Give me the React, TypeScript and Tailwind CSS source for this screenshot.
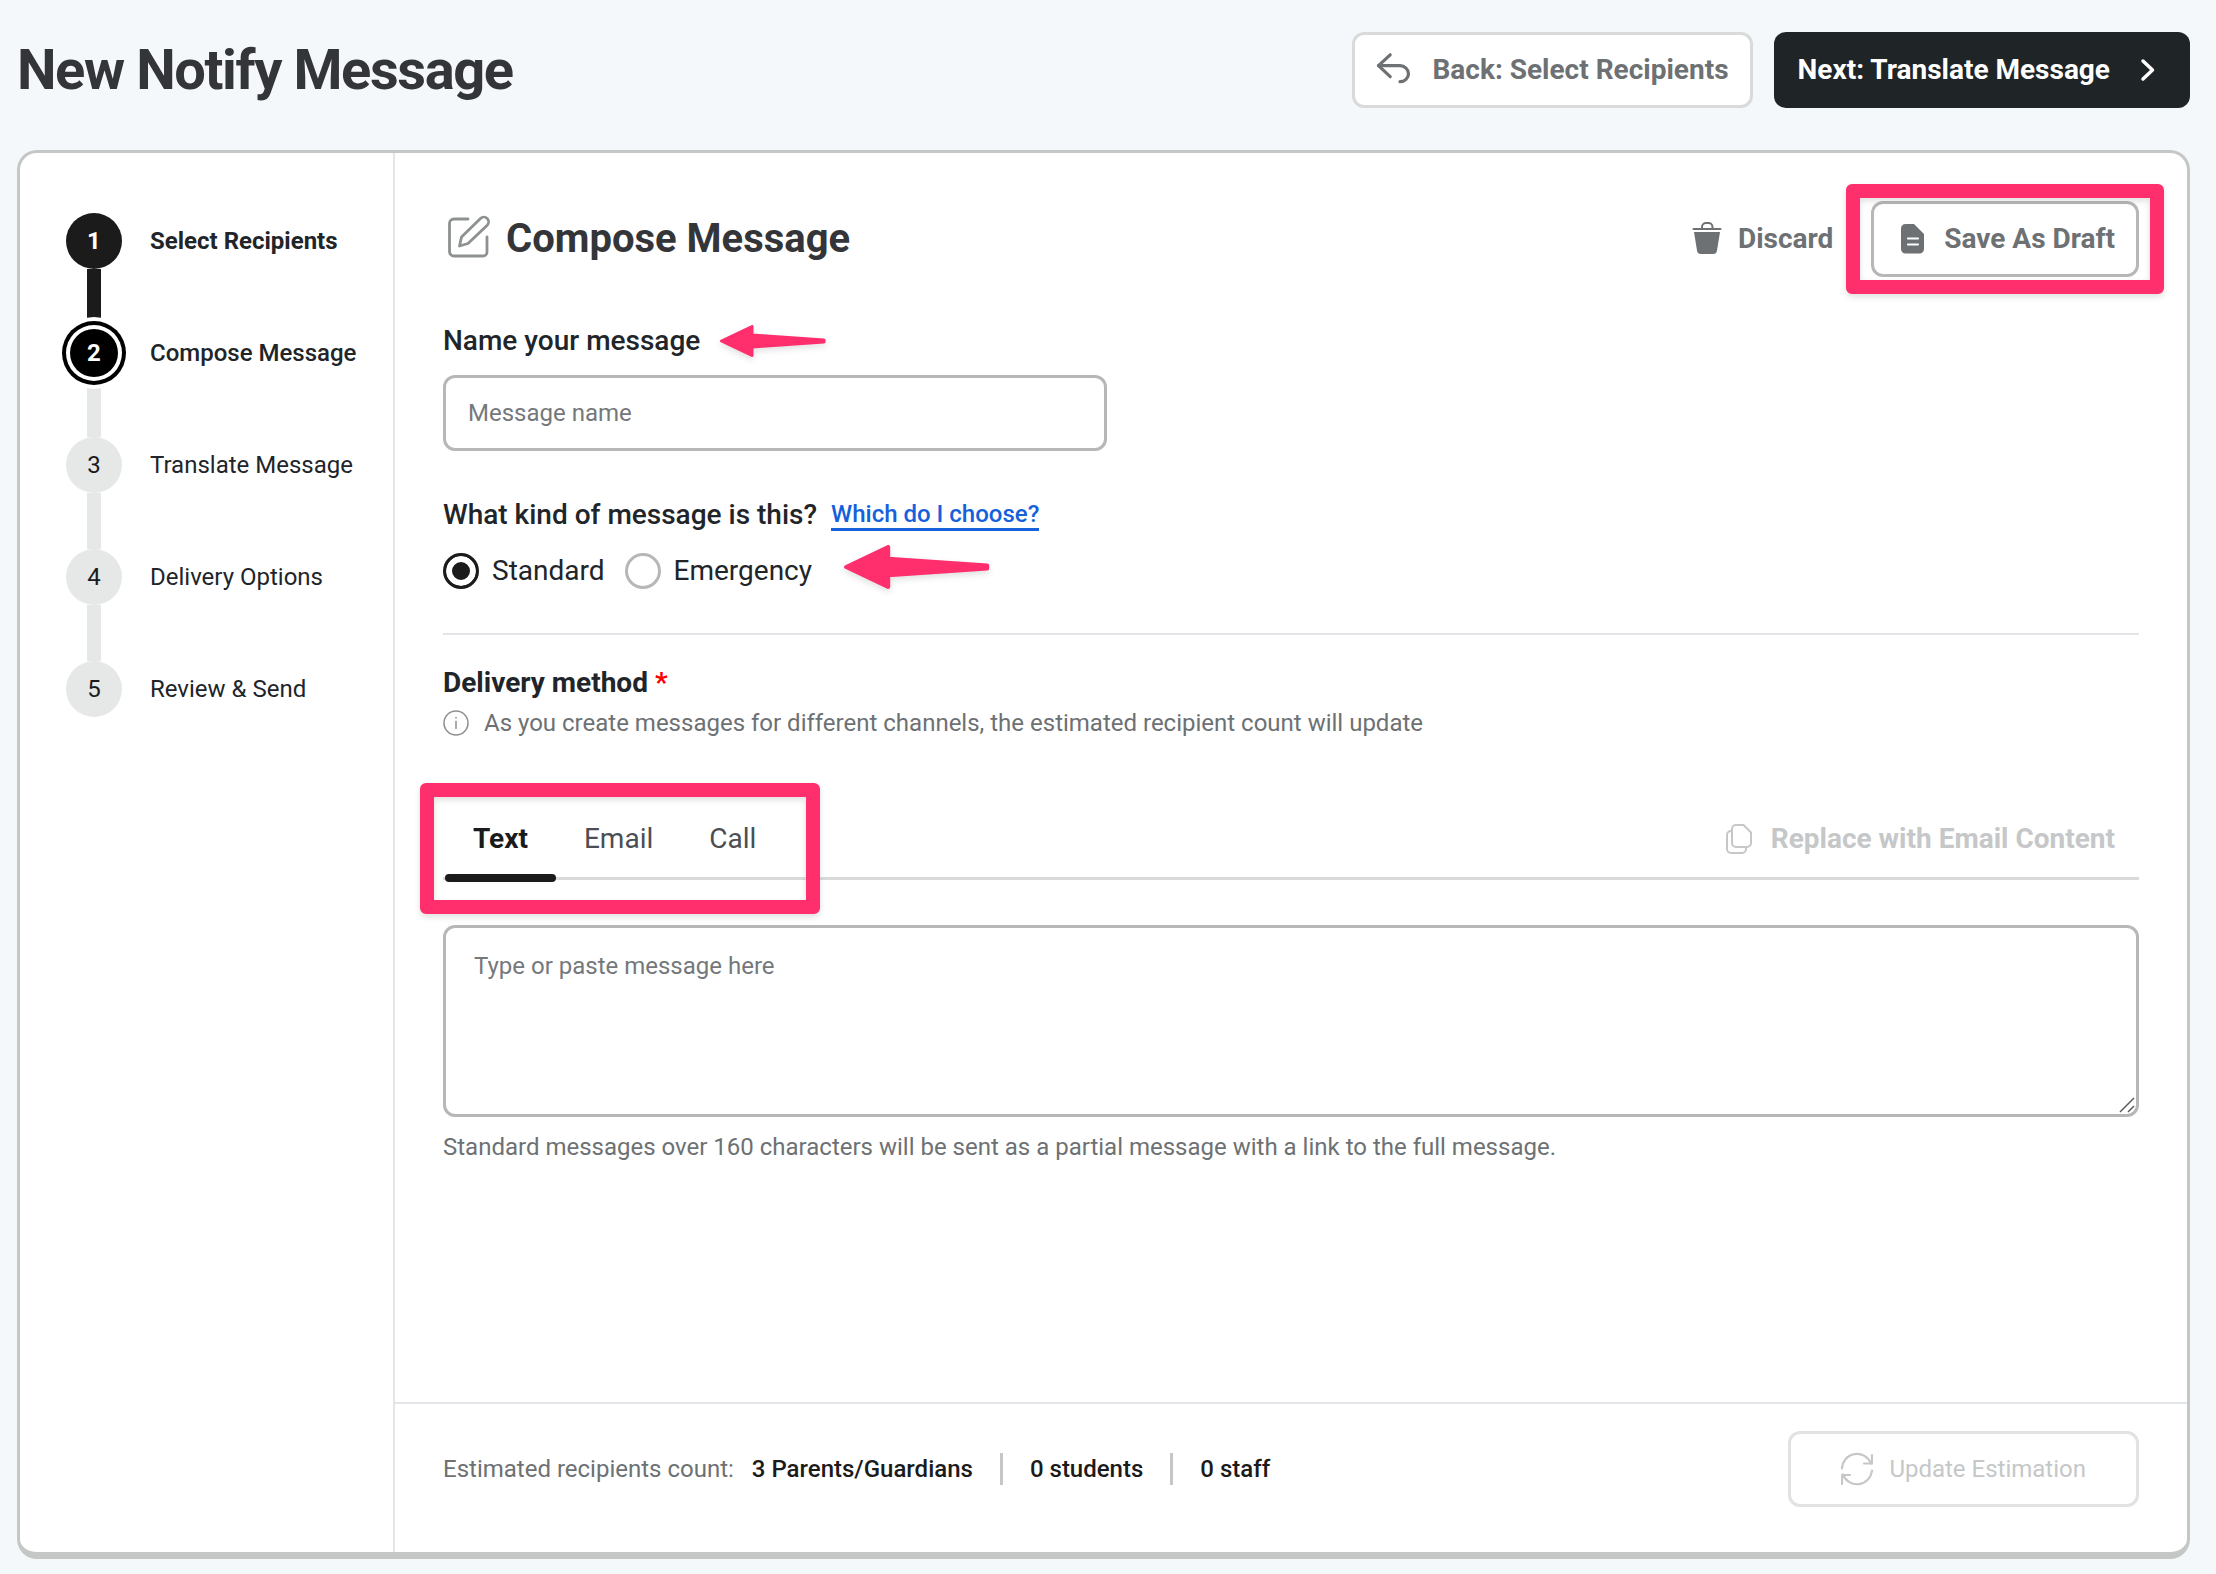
import { useState } from 'react';
import clsx from 'clsx';

interface Step {
  id: number;
  label: string;
}

const steps: Step[] = [
  { id: 1, label: 'Select Recipients' },
  { id: 2, label: 'Compose Message' },
  { id: 3, label: 'Translate Message' },
  { id: 4, label: 'Delivery Options' },
  { id: 5, label: 'Review & Send' },
];

const tabs = ['Text', 'Email', 'Call'];
const currentStep = 2;

function BackIcon() {
  return (
    <svg className="h-9 w-9" viewBox="0 0 36 36" fill="none" stroke="currentColor" strokeWidth="3.2" strokeLinecap="round" strokeLinejoin="round">
      <path d="M14.200 2.800 2.500 13.700l11.700 11" />
      <path d="M2.500 13.700h21.500a8.500 8 0 0 1 0 16" />
    </svg>
  );
}

function ChevronIcon() {
  return (
    <svg className="h-6 w-4" viewBox="0 0 16 24" fill="none" stroke="currentColor" strokeWidth="3.5" strokeLinecap="round" strokeLinejoin="round">
      <path d="M3 3l9.500 9L3 21" />
    </svg>
  );
}

function TrashIcon() {
  return (
    <svg className="h-[34px] w-[30px]" viewBox="0 0 30 34" fill="currentColor">
      <path d="M1.500 7h27" stroke="currentColor" strokeWidth="2" strokeLinecap="round" />
      <path d="M10 7V5a4 4 0 0 1 4-4h2.500a4 4 0 0 1 4 4v2" fill="none" stroke="currentColor" strokeWidth="2" />
      <path d="M2 10h26l-3 18.500a4 4 0 0 1-4 3.500H9a4 4 0 0 1-4-3.500z" />
    </svg>
  );
}

function DocIcon() {
  return (
    <svg className="h-[30px] w-6" viewBox="0 0 24 30" fill="currentColor">
      <path d="M4.500 0h8.500L23 10v15a4.500 4.500 0 0 1-4.500 4.500h-14A4.500 4.500 0 0 1 0 25V4.500A4.500 4.500 0 0 1 4.500 0z" />
      <path d="M7 14.500h10M7 20.500h10" stroke="#fff" strokeWidth="2.2" strokeLinecap="round" />
    </svg>
  );
}

function ComposeIcon() {
  return (
    <svg className="h-12 w-11" viewBox="0 0 44 48" fill="none" stroke="#8e9191" strokeWidth="2.800" strokeLinecap="round" strokeLinejoin="round">
      <path d="M22 4H8a4.500 4.500 0 0 0-4.500 4.500v28A4.500 4.500 0 0 0 8 41h29a4 4 0 0 0 4-4V22" />
      <path d="M13.500 31l2-9L34.500 3.500a4.700 4.700 0 0 1 6.700 6.700L22 28.500z" />
    </svg>
  );
}

function InfoIcon() {
  return (
    <svg className="h-[26px] w-[26px]" viewBox="0 0 26 26" fill="none" stroke="#8e8f90" strokeWidth="1.500" strokeLinecap="round">
      <circle cx="13" cy="13" r="12" />
      <path d="M13 11.500v7M13 7.500v.5" />
    </svg>
  );
}

function CopyIcon() {
  return (
    <svg className="h-[30px] w-[26px]" viewBox="0 0 26 30" fill="none" stroke="currentColor" strokeWidth="2" strokeLinejoin="round">
      <path d="M10 1h7.500L25 8.500V19a4 4 0 0 1-4 4H10a4 4 0 0 1-4-4V5a4 4 0 0 1 4-4z" />
      <path d="M6 7H5a4 4 0 0 0-4 4v14a4 4 0 0 0 4 4h11a4 4 0 0 0 4-4v-2" />
    </svg>
  );
}

function RefreshIcon() {
  return (
    <svg className="h-[34px] w-8" viewBox="0 0 32 34" fill="none" stroke="currentColor" strokeWidth="2.2" strokeLinecap="round" strokeLinejoin="round">
      <path d="M1 16.500a15 15 0 0 1 29-5" />
      <path d="M31 3v8.500h-8" />
      <path d="M31 18.500a15 15 0 0 1-29 4" />
      <path d="M1 32v-9h8" />
    </svg>
  );
}

function PinkArrow({ className }: { className: string }) {
  return (
    <svg className={clsx('drop-shadow-md', className)} viewBox="0 0 106 32" fill="#ff2e6c" stroke="#ff2e6c" strokeLinejoin="round" strokeWidth="3" overflow="visible">
      <path d="M1.500 16 32 1.500v8.500L104 15v2L32 22v8.500z" />
    </svg>
  );
}

function StepList() {
  return (
    <ol className="flex w-[375px] shrink-0 flex-col border-r-2 border-[#e4e5e9] px-[43px] pt-[60px]">
      {steps.map((step) => (
        <li key={step.id} className="relative flex h-28 items-start">
          {step.id < steps.length && (
            <span
              className={clsx(
                'absolute top-14 left-6 h-14 w-3.5',
                step.id < currentStep ? 'bg-[#1b1b1b]' : 'bg-[#e5e8e6]'
              )}
            />
          )}
          <div className="relative flex h-14 items-center gap-[25px]">
            <span className="flex w-[62px] justify-center">
              <span
                className={clsx(
                  'flex shrink-0 items-center justify-center rounded-full text-2xl',
                  step.id < currentStep && 'h-14 w-14 bg-[#1b1b1b] font-bold text-white',
                  step.id === currentStep && 'h-12 w-12 bg-black font-bold text-white shadow-[0_0_0_4px_#fff,0_0_0_8px_#000,0_0_0_12px_#fff]',
                  step.id > currentStep && 'h-14 w-14 bg-[#e5e8e6] text-[#1b1b1b]'
                )}
              >
                {step.id}
              </span>
            </span>
            <span
              className={clsx(
                'text-2xl whitespace-nowrap text-[#212529]',
                step.id < currentStep && 'font-bold',
                step.id === currentStep && 'font-medium'
              )}
            >
              {step.label}
            </span>
          </div>
        </li>
      ))}
    </ol>
  );
}

export default function App() {
  const [kind, setKind] = useState('standard');
  const [activeTab, setActiveTab] = useState('Text');

  return (
    <div className="flex min-h-screen flex-col bg-[#f4f8fb] pr-[26px] pb-[15px] pl-[17px] font-[Roboto,sans-serif] text-[#212529]">
      <header className="flex items-center justify-between pt-8 pb-[42px]">
        <h1 className="text-[56px] leading-[76px] font-bold tracking-tight text-[#343538]">New Notify Message</h1>
        <div className="flex gap-[21px]">
          <button className="flex h-[76px] items-center gap-5 rounded-xl border-3 border-[#d9dbda] bg-white px-[21px] text-[28px] font-bold text-[#6d7173]">
            <BackIcon />
            Back: Select Recipients
          </button>
          <button className="flex h-[76px] items-center gap-[30px] rounded-xl bg-[#1f2427] pr-[34px] pl-6 text-[28px] font-bold text-white">
            Next: Translate Message
            <ChevronIcon />
          </button>
        </div>
      </header>

      <div className="flex grow rounded-[20px] border-3 border-b-7 border-[#c5c7c6] bg-white">
        <StepList />

        <main className="flex min-w-0 grow flex-col">
          <div className="px-12 pt-12">
            <div className="flex items-center justify-between">
              <div className="flex items-center gap-4 pl-[3px]">
                <ComposeIcon />
                <h2 className="text-[40px] leading-[48px] font-bold text-[#343538]">Compose Message</h2>
              </div>
              <div className="flex items-center gap-[38px] text-[28px] font-bold text-[#6d7173]">
                <button className="flex items-center gap-4">
                  <TrashIcon />
                  Discard
                </button>
                <div className="relative">
                  <button className="flex h-[76px] items-center gap-[19px] rounded-xl border-3 border-[#b6b8b7] pr-[21px] pl-[27px]">
                    <DocIcon />
                    Save As Draft
                  </button>
                  <span className="pointer-events-none absolute -inset-x-[25px] -inset-y-[17px] rounded-md border-14 border-[#ff2e6c] drop-shadow-md" />
                </div>
              </div>
            </div>

            <div className="mt-11 flex items-center gap-5">
              <label htmlFor="message-name" className="text-[28px] leading-10 font-medium">
                Name your message
              </label>
              <PinkArrow className="h-8 w-[106px]" />
            </div>
            <input
              id="message-name"
              type="text"
              placeholder="Message name"
              className="mt-3.5 block h-[76px] w-full max-w-[664px] rounded-xl border-3 border-[#b6b8b7] bg-white px-[22px] text-2xl placeholder:text-[#75787b]"
            />

            <fieldset className="mt-11">
              <legend className="flex items-center gap-3.5 text-[28px] leading-10 font-medium">
                What kind of message is this?
                <a href="#help" className="border-b-3 border-[#1560db] text-2xl leading-7 text-[#1560db]">
                  Which do I choose?
                </a>
              </legend>
              <div className="mt-2.5 flex items-center gap-5 text-[28px] leading-10">
                {['Standard', 'Emergency'].map((option) => (
                  <label key={option} className="flex items-center gap-[13px]">
                    <input
                      type="radio"
                      name="kind"
                      checked={kind === option.toLowerCase()}
                      onChange={() => setKind(option.toLowerCase())}
                      className="h-9 w-9 appearance-none rounded-full border-3 border-[#b6b8b7] bg-white checked:border-[#1b1b1b] checked:bg-[#1b1b1b] checked:shadow-[inset_0_0_0_6px_#fff]"
                    />
                    {option}
                  </label>
                ))}
                <PinkArrow className="mb-2 ml-2.5 h-11 w-[150px]" />
              </div>
            </fieldset>

            <hr className="mt-9 border-t-2 border-[#e4e5e9]" />

            <h3 className="mt-[30px] text-[28px] leading-9 font-bold">
              Delivery method <span className="text-[#ff0000]">*</span>
            </h3>
            <p className="mt-1 flex items-center gap-[15px] text-2xl leading-9 text-[#6d7173]">
              <InfoIcon />
              As you create messages for different channels, the estimated recipient count will update
            </p>

            <div className="relative mt-16 flex justify-between border-b-3 border-[#d9dbda]">
              <div role="tablist" className="flex pl-0.5 text-[28px]">
                {tabs.map((tab) => (
                  <button
                    key={tab}
                    role="tab"
                    aria-selected={activeTab === tab}
                    onClick={() => setActiveTab(tab)}
                    className={clsx(
                      'relative h-[72px] px-7 pb-1',
                      activeTab === tab ? 'font-bold text-[#1b1b1b]' : 'text-[#4b4f54]'
                    )}
                  >
                    {tab}
                    {activeTab === tab && <span className="absolute inset-x-0 -bottom-[5px] h-2 rounded bg-[#1b1b1b]" />}
                  </button>
                ))}
              </div>
              <button disabled className="flex items-center gap-[19px] pr-6 pb-1 text-[28px] font-bold text-[#c5c7c8]">
                <CopyIcon />
                Replace with Email Content
              </button>
              <span className="pointer-events-none absolute -top-[22px] -left-[23px] h-[131px] w-[400px] rounded-md border-14 border-[#ff2e6c] drop-shadow-md" />
            </div>

            <div className="relative mt-[45px]">
              <textarea
                aria-label="Message"
                placeholder="Type or paste message here"
                className="block h-48 w-full resize-none rounded-xl border-3 border-[#b6b8b7] px-7 py-5 text-2xl leading-9 placeholder:text-[#75787b]"
              />
              <svg className="pointer-events-none absolute right-1 bottom-1 h-4 w-4" viewBox="0 0 16 16" stroke="#5a5c5e" strokeWidth="1.500">
                <path d="M1 15 15 1M9 15l6-6" />
              </svg>
            </div>
            <p className="mt-3 text-2xl leading-9 text-[#6d7173]">
              Standard messages over 160 characters will be sent as a partial message with a link to the full message.
            </p>
          </div>

          <footer className="mt-auto flex items-center justify-between border-t-2 border-[#e4e5e9] px-12 pt-[27px] pb-[45px]">
            <div className="flex items-center text-2xl font-medium text-[#1b1b1b]">
              <span className="mr-[18px] font-normal text-[#6d7173]">Estimated recipients count:</span>
              <span>3 Parents/Guardians</span>
              <span className="mx-[27px] h-8 w-[3px] bg-[#c5c7c6]" />
              <span>0 students</span>
              <span className="mx-[27px] h-8 w-[3px] bg-[#c5c7c6]" />
              <span>0 staff</span>
            </div>
            <button disabled className="flex h-[76px] items-center gap-4 rounded-xl border-3 border-[#e1e2e2] px-[50px] text-2xl text-[#c5c7c8]">
              <RefreshIcon />
              Update Estimation
            </button>
          </footer>
        </main>
      </div>
    </div>
  );
}
